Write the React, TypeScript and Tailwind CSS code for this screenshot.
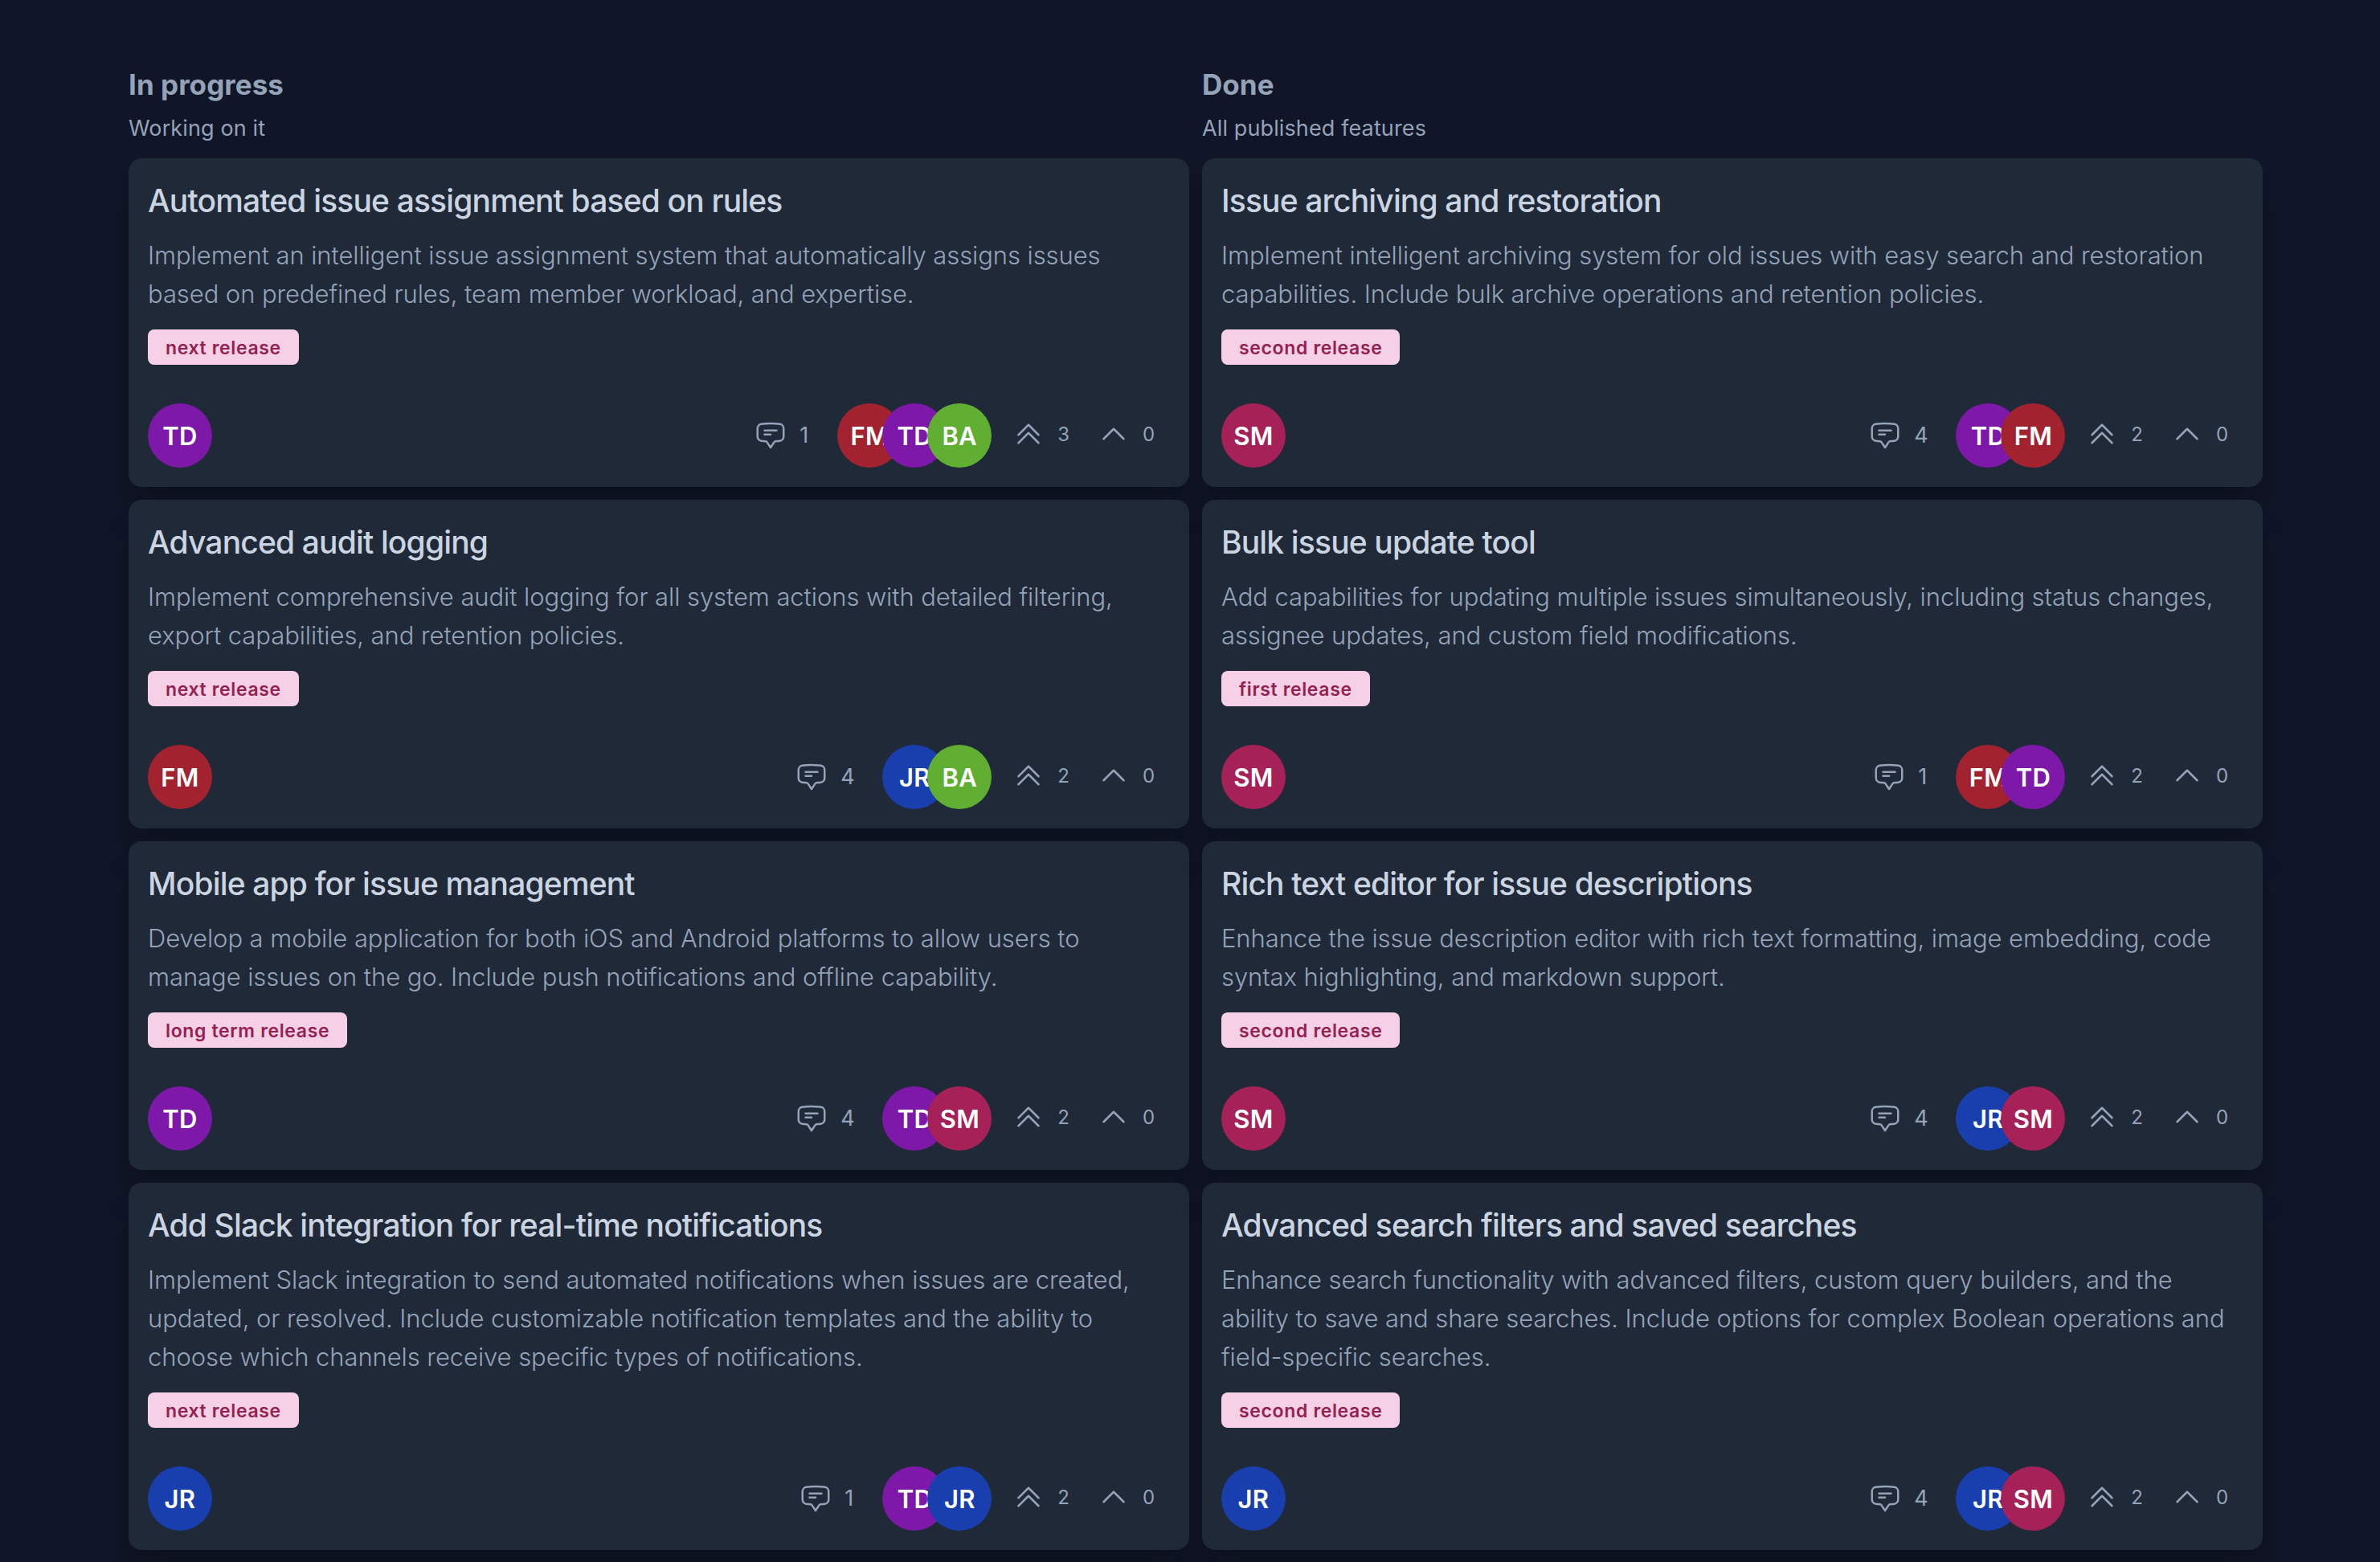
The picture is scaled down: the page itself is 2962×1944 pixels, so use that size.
import {
    HiOutlineChatBubbleBottomCenterText,
    HiOutlineChevronDoubleUp,
    HiOutlineChevronUp,
} from 'react-icons/hi2';
import clsx from 'clsx';

type Initials = 'TD' | 'FM' | 'BA' | 'SM' | 'JR';

interface Issue {
    title: string;
    lines: string[];
    release: string;
    author: Initials;
    comments: number;
    assignees: Initials[];
    upvotes: number;
}

interface Column {
    name: string;
    hint: string;
    issues: Issue[];
}

const avatarColors: Record<Initials, string> = {
    TD: 'bg-[#7d18a9]',
    FM: 'bg-[#a32230]',
    BA: 'bg-[#60af33]',
    SM: 'bg-[#a62157]',
    JR: 'bg-[#183fad]',
};

const columns: Column[] = [
    {
        name: 'In progress',
        hint: 'Working on it',
        issues: [
            {
                title: 'Automated issue assignment based on rules',
                lines: [
                    'Implement an intelligent issue assignment system that automatically assigns issues',
                    'based on predefined rules, team member workload, and expertise.',
                ],
                release: 'next release',
                author: 'TD',
                comments: 1,
                assignees: ['FM', 'TD', 'BA'],
                upvotes: 3,
            },
            {
                title: 'Advanced audit logging',
                lines: [
                    'Implement comprehensive audit logging for all system actions with detailed filtering,',
                    'export capabilities, and retention policies.',
                ],
                release: 'next release',
                author: 'FM',
                comments: 4,
                assignees: ['JR', 'BA'],
                upvotes: 2,
            },
            {
                title: 'Mobile app for issue management',
                lines: [
                    'Develop a mobile application for both iOS and Android platforms to allow users to',
                    'manage issues on the go. Include push notifications and offline capability.',
                ],
                release: 'long term release',
                author: 'TD',
                comments: 4,
                assignees: ['TD', 'SM'],
                upvotes: 2,
            },
            {
                title: 'Add Slack integration for real-time notifications',
                lines: [
                    'Implement Slack integration to send automated notifications when issues are created,',
                    'updated, or resolved. Include customizable notification templates and the ability to',
                    'choose which channels receive specific types of notifications.',
                ],
                release: 'next release',
                author: 'JR',
                comments: 1,
                assignees: ['TD', 'JR'],
                upvotes: 2,
            },
        ],
    },
    {
        name: 'Done',
        hint: 'All published features',
        issues: [
            {
                title: 'Issue archiving and restoration',
                lines: [
                    'Implement intelligent archiving system for old issues with easy search and restoration',
                    'capabilities. Include bulk archive operations and retention policies.',
                ],
                release: 'second release',
                author: 'SM',
                comments: 4,
                assignees: ['TD', 'FM'],
                upvotes: 2,
            },
            {
                title: 'Bulk issue update tool',
                lines: [
                    'Add capabilities for updating multiple issues simultaneously, including status changes,',
                    'assignee updates, and custom field modifications.',
                ],
                release: 'first release',
                author: 'SM',
                comments: 1,
                assignees: ['FM', 'TD'],
                upvotes: 2,
            },
            {
                title: 'Rich text editor for issue descriptions',
                lines: [
                    'Enhance the issue description editor with rich text formatting, image embedding, code',
                    'syntax highlighting, and markdown support.',
                ],
                release: 'second release',
                author: 'SM',
                comments: 4,
                assignees: ['JR', 'SM'],
                upvotes: 2,
            },
            {
                title: 'Advanced search filters and saved searches',
                lines: [
                    'Enhance search functionality with advanced filters, custom query builders, and the',
                    'ability to save and share searches. Include options for complex Boolean operations and',
                    'field-specific searches.',
                ],
                release: 'second release',
                author: 'JR',
                comments: 4,
                assignees: ['JR', 'SM'],
                upvotes: 2,
            },
        ],
    },
];

function Avatar({ initials }: { initials: Initials }) {
    return (
        <div
            className={clsx(
                'flex h-20 w-20 items-center justify-center rounded-full pt-0.5 text-[31px] font-semibold tracking-[0.3px] text-white',
                avatarColors[initials],
            )}
        >
            {initials}
        </div>
    );
}

function IssueCard({ issue }: { issue: Issue }) {
    return (
        <div className="rounded-2xl bg-[#202938] p-6 shadow-[0_40px_50px_-10px_rgba(4,12,4,0.18),0_16px_20px_-12px_rgba(4,12,4,0.18)]">
            <h2 className="text-[39px] leading-[58px] font-medium tracking-[-0.85px] whitespace-nowrap text-[#cbd5e1]">
                {issue.title}
            </h2>
            <div className="mt-[15px] text-[31px] leading-[48px] font-light tracking-[-0.08px] whitespace-nowrap text-[#94a3b8]">
                {issue.lines.map((line) => (
                    <p key={line}>{line}</p>
                ))}
            </div>
            <span className="mt-5 flex h-11 w-fit items-center rounded-lg bg-[#f5d0e6] px-[22px] pt-0.5 text-[23px] font-semibold tracking-[0.65px] text-[#932250]">
                {issue.release}
            </span>
            <div className="mt-12 flex items-center justify-between">
                <Avatar initials={issue.author} />
                <div className="flex items-center text-[#94a3b8]">
                    <HiOutlineChatBubbleBottomCenterText className="h-10 w-10" />
                    <span className={clsx('ml-4 text-[27px]', issue.comments === 1 ? 'w-[13px]' : 'w-[18px]')}>
                        {issue.comments}
                    </span>
                    <div className="ml-[34px] flex -space-x-6">
                        {issue.assignees.map((a) => (
                            <Avatar key={a} initials={a} />
                        ))}
                    </div>
                    {/* Votes */}
                    <div className="ml-[26px] flex pb-1 text-2xl leading-10">
                        <div className="mr-[35px] flex items-center gap-4">
                            <HiOutlineChevronDoubleUp className="h-10 w-10" />
                            <span className="pt-0.5">{issue.upvotes}</span>
                        </div>
                        <div className="flex w-[90px] items-center gap-4">
                            <HiOutlineChevronUp className="h-10 w-10" />
                            <span className="pt-0.5">0</span>
                        </div>
                    </div>
                </div>
            </div>
        </div>
    );
}

export default function App() {
    return (
        <div className="h-[1944px] overflow-hidden bg-[#101527] pt-[79px] pl-40 font-['Inter',sans-serif]">
            <div className="flex gap-4">
                {columns.map((column) => (
                    <section key={column.name} className="w-[1320px] shrink-0">
                        <h1 className="text-[35px] leading-[52px] font-bold tracking-[0.05px] text-[#94a3b8]">
                            {column.name}
                        </h1>
                        <p className="mt-[7px] mb-[15px] text-[27px] leading-[44px] tracking-[0.12px] text-[#94a3b8]">
                            {column.hint}
                        </p>
                        <div className="flex flex-col gap-4">
                            {column.issues.map((issue) => (
                                <IssueCard key={issue.title} issue={issue} />
                            ))}
                        </div>
                    </section>
                ))}
            </div>
        </div>
    );
}
